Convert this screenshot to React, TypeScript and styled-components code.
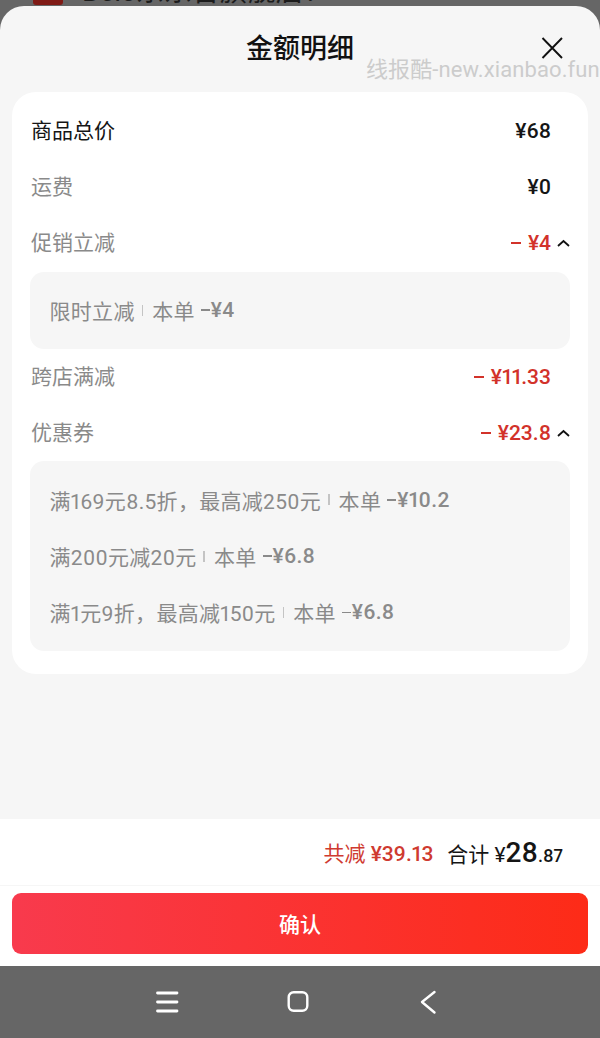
import React from "react";
import styled, { createGlobalStyle } from "styled-components";

const GlobalStyle = createGlobalStyle`
    html, body {
        margin: 0;
        padding: 0;
        background: #666666;
    }
    body {
        font-family: "Roboto", "Noto Sans CJK SC", sans-serif;
        font-variant-numeric: proportional-nums;
    }
`;

const Page = styled.div`
    width: 600px;
    height: 1038px;
    display: flex;
    flex-direction: column;
    overflow: hidden;
    position: relative;
    background: #666666;
`;

const Behind = styled.div`
    height: 6px;
    flex: none;
    overflow: hidden;
    padding-left: 33px;
    display: flex;
    align-items: flex-start;
    gap: 19px;
`;

const BehindTag = styled.div`
    flex: none;
    width: 30px;
    height: 5px;
    background: #7f1a15;
    border-radius: 0 0 3px 3px;
`;

const BehindName = styled.div`
    flex: none;
    margin-top: -8px;
    line-height: 0;
    font-size: 28px;
    color: #1c1c1c;
    white-space: nowrap;
`;

const Sheet = styled.div`
    flex: 1;
    display: flex;
    flex-direction: column;
    background: #f6f6f6;
    border-radius: 24px 24px 0 0;
    min-height: 0;
`;

const Header = styled.div`
    height: 86px;
    flex: none;
    position: relative;
    display: flex;
    justify-content: center;
    align-items: center;
`;

const Title = styled.div`
    font-size: 27px;
    font-weight: 500;
    color: #111111;
    line-height: 36px;
`;

const CloseIcon = styled.svg`
    position: absolute;
    right: 37px;
    top: 31px;
    width: 22px;
    height: 22px;
`;

const Watermark = styled.div`
    position: absolute;
    left: 366px;
    top: 56px;
    font-size: 22px;
    line-height: 28px;
    letter-spacing: 0.1px;
    color: #cccccc;
    white-space: nowrap;
`;

const Card = styled.div`
    margin: 0 12px;
    padding: 11px 18px 23px;
    background: #ffffff;
    border-radius: 24px;
`;

const Row = styled.div`
    height: 56.2px;
    display: flex;
    justify-content: space-between;
    align-items: center;
    padding: 0 19px 0 1px;
    position: relative;
`;

const Label = styled.span<{ $dark?: boolean }>`
    font-size: 21px;
    line-height: 28px;
    color: ${(p) => (p.$dark ? "#151515" : "#8a8a8a")};
`;

const Amount = styled.span<{ $red?: boolean }>`
    font-size: 21px;
    font-weight: 500;
    color: ${(p) => (p.$red ? "#d2322a" : "#151515")};
    white-space: nowrap;
    display: flex;
    align-items: center;
`;

const Minus = styled.span`
    width: 10px;
    height: 2px;
    background: #d2322a;
    margin-right: 7px;
`;

const Chevron = styled.svg`
    position: absolute;
    right: 0;
    top: 23.5px;
    width: 13px;
    height: 8px;
`;

const Detail = styled.div`
    background: #f6f6f6;
    border-radius: 14px;
    padding: 10.5px 19.5px;
`;

const DetailRow = styled.div`
    height: 56.3px;
    box-sizing: border-box;
    display: flex;
    align-items: center;
    font-size: 21px;
    letter-spacing: 0.3px;
    color: #8a8a8a;
    white-space: nowrap;
`;

const Divider = styled.span`
    width: 1.5px;
    height: 11px;
    background: #c4c4c4;
    margin: 0 9px 0 7px;
`;

const Dash = styled.span`
    width: 9px;
    height: 1.8px;
    background: #8a8a8a;
    margin: 0 1px 0 6px;
`;

const Saved = styled.span`
    font-weight: 500;
`;

const Spacer = styled.div`
    flex: 1;
`;

const TotalBar = styled.div`
    height: 67px;
    flex: none;
    background: #ffffff;
    border-bottom: 1px solid #f6f6f6;
    display: flex;
    justify-content: flex-end;
    align-items: center;
    padding-right: 37px;
    box-sizing: border-box;
`;

const Reduced = styled.span`
    font-size: 21px;
    color: #cf3a30;
    margin-right: 14px;
`;

const TotalLabel = styled.span`
    font-size: 21px;
    color: #151515;
    display: flex;
    align-items: baseline;
`;

const TotalBig = styled.span`
    font-size: 28px;
    font-weight: 500;
`;

const TotalCents = styled.span`
    font-size: 18px;
    font-weight: 500;
`;

const ButtonBar = styled.div`
    height: 80px;
    flex: none;
    box-sizing: border-box;
    background: #ffffff;
    padding: 7px 12px 12px;
`;

const Confirm = styled.button`
    width: 100%;
    height: 61px;
    padding: 0 0 2px;
    border: none;
    border-radius: 9px;
    background: linear-gradient(90deg, #f83a4d, #fd2b17);
    color: #ffffff;
    font-family: inherit;
    font-size: 21px;
    font-weight: 500;
`;

const NavBar = styled.div`
    height: 72px;
    flex: none;
    background: #666666;
    display: flex;
    justify-content: center;
    align-items: center;
    gap: 106.5px;
    padding-right: 5px;
`;

const NavIcon = styled.svg`
    width: 24px;
    height: 26px;
`;

const Chev = () => (
    <Chevron viewBox="0 0 13 8">
        <path d="M1 7L6.5 2L12 7" fill="none" stroke="#111" strokeWidth="1.8" />
    </Chevron>
);

export default function App() {
    return (
        <Page>
            <GlobalStyle />
            <Behind>
                <BehindTag />
                <BehindName>Belc东东合旗舰店？</BehindName>
            </Behind>
            <Sheet>
                <Header>
                    <Title>金额明细</Title>
                    <CloseIcon viewBox="0 0 22 22">
                        <path d="M1.5 1L21 21M21 1L1.5 21" stroke="#111" strokeWidth="1.9" fill="none" />
                    </CloseIcon>
                </Header>
                <Card>
                    <Row>
                        <Label $dark>商品总价</Label>
                        <Amount>¥68</Amount>
                    </Row>
                    <Row>
                        <Label>运费</Label>
                        <Amount>¥0</Amount>
                    </Row>
                    <Row>
                        <Label>促销立减</Label>
                        <Amount $red>
                            <Minus />
                            ¥4
                        </Amount>
                        <Chev />
                    </Row>
                    <Detail>
                        <DetailRow>
                            限时立减
                            <Divider />
                            本单
                            <Dash />
                            <Saved>¥4</Saved>
                        </DetailRow>
                    </Detail>
                    <Row>
                        <Label>跨店满减</Label>
                        <Amount $red>
                            <Minus />
                            ¥11.33
                        </Amount>
                    </Row>
                    <Row>
                        <Label>优惠券</Label>
                        <Amount $red>
                            <Minus />
                            ¥23.8
                        </Amount>
                        <Chev />
                    </Row>
                    <Detail>
                        <DetailRow>
                            满169元8.5折，最高减250元
                            <Divider />
                            本单
                            <Dash />
                            <Saved>¥10.2</Saved>
                        </DetailRow>
                        <DetailRow>
                            满200元减20元
                            <Divider />
                            本单
                            <Dash />
                            <Saved>¥6.8</Saved>
                        </DetailRow>
                        <DetailRow>
                            满1元9折，最高减150元
                            <Divider />
                            本单
                            <Dash />
                            <Saved>¥6.8</Saved>
                        </DetailRow>
                    </Detail>
                </Card>
                <Spacer />
                <TotalBar>
                    <Reduced>
                        共减 <Saved>¥39.13</Saved>
                    </Reduced>
                    <TotalLabel>
                        合计 ¥<TotalBig>28</TotalBig>
                        <TotalCents>.87</TotalCents>
                    </TotalLabel>
                </TotalBar>
                <ButtonBar>
                    <Confirm>确认</Confirm>
                </ButtonBar>
            </Sheet>
            <NavBar>
                <NavIcon viewBox="0 0 24 26">
                    <path d="M2.5 4H22M2.5 13H22M2.5 22H22" stroke="#fff" strokeWidth="2.8" strokeLinecap="round" fill="none" />
                </NavIcon>
                <NavIcon viewBox="0 0 24 26">
                    <rect x="2.7" y="3.2" width="18.6" height="18.6" rx="5" stroke="#fff" strokeWidth="2.4" fill="none" />
                </NavIcon>
                <NavIcon viewBox="0 0 24 26">
                    <path d="M18.5 3L6 13L18.5 23.5" stroke="#fff" strokeWidth="2.4" strokeLinecap="round" strokeLinejoin="round" fill="none" />
                </NavIcon>
            </NavBar>
            <Watermark>线报酷-new.xianbao.fun</Watermark>
        </Page>
    );
}
